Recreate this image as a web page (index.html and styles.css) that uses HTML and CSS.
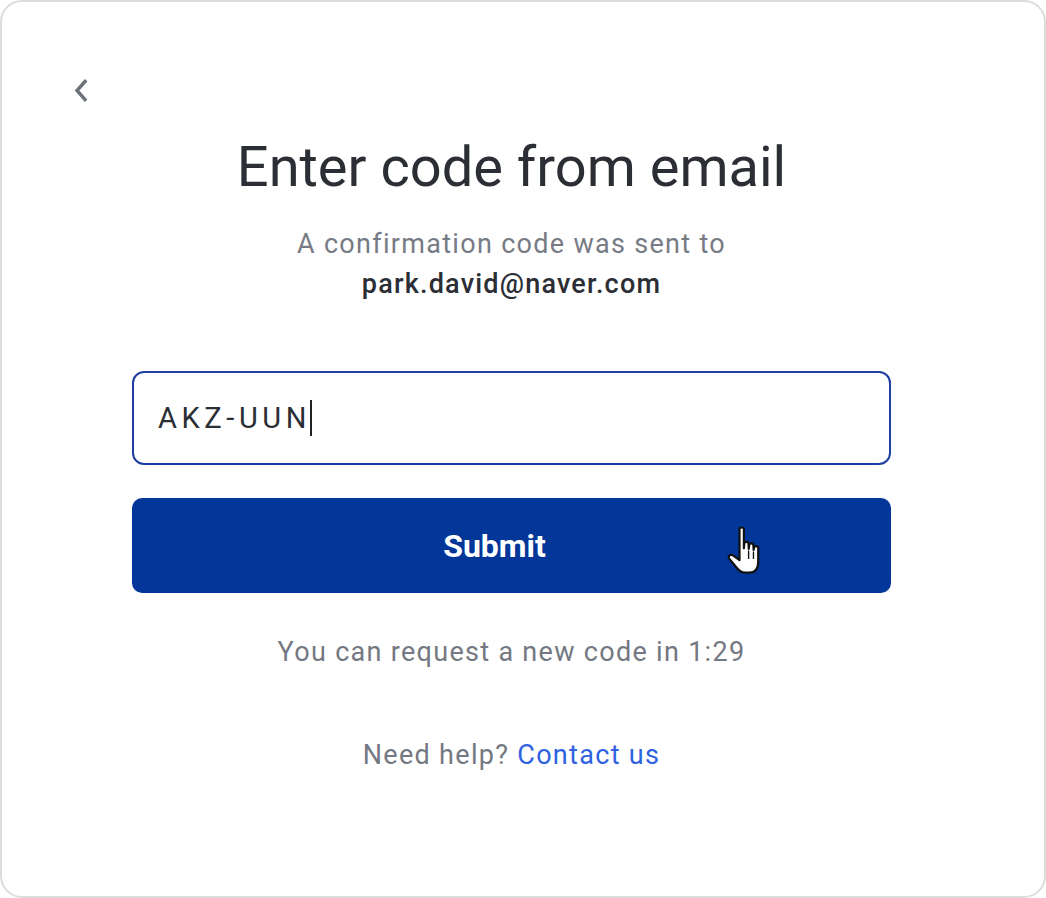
FILE: index.html
```html
<!DOCTYPE html>
<html lang="en">
<head>
    <meta charset="UTF-8">
    <meta name="viewport" content="width=device-width, initial-scale=1.0">
    <title>Enter code from email</title>
    <link rel="stylesheet" href="styles.css">
</head>
<body>

    <div class="card">
        <a class="back" href="#" aria-label="Back">
            <svg width="24" height="30" viewBox="0 0 24 30">
                <path d="M17 3.5 L9 12.5 L17 21.5" fill="none" stroke="#6b7079" stroke-width="3.4" stroke-linecap="square"/>
            </svg>
        </a>

        <div class="content">
            <h1>Enter code from email</h1>
            <p class="sub">A confirmation code was sent to</p>
            <p class="email">park.david@naver.com</p>

            <form id="codeForm">
                <div class="code-input">
                    <span class="code-text">AKZ-UUN</span><span class="caret"></span>
                </div>
                <button type="submit" class="submit">
                    Submit
                    <svg class="pointer" width="46" height="65" viewBox="0 0 17 24">
                        <path d="M5 1.5 C5 0.7 6.6 0.7 6.6 1.5 L6.6 8.6 L6.8 6.8 C6.8 6 8.3 6 8.3 6.8 L8.4 8.8 L8.6 7.4 C8.6 6.6 10.1 6.6 10.1 7.4 L10.2 9.2 L10.4 8.4 C10.4 7.6 11.9 7.6 11.9 8.4 L11.9 13.6 C11.9 16.4 10.6 17.6 8.6 17.6 L7 17.6 C5.6 17.6 4.8 16.9 3.8 15.6 L1.2 12.4 C0.6 11.6 1.6 10.6 2.6 11.2 L5 13 Z" fill="#ffffff" stroke="#111111" stroke-width="0.8" stroke-linejoin="round"/>
                        <path d="M8.35 9.4 L8.35 12.6 M10.15 9.8 L10.15 12.6" stroke="#111" stroke-width="0.5"/>
                    </svg>
                </button>
            </form>

            <p class="timer">You can request a new code in 1:29</p>
            <p class="help">Need help? <a href="#">Contact us</a></p>
        </div>
    </div>

</body>
</html>
```

FILE: styles.css
```css
html, body {
    margin: 0;
    padding: 0;
    background-color: #ffffff;
}

body {
    font-family: Roboto, "Liberation Sans", Arial, sans-serif;
    height: 898px;
    box-sizing: border-box;
}

.card {
    box-sizing: border-box;
    height: 898px;
    border: 2px solid #dcdcdc;
    border-radius: 22px;
    background-color: #fff;
    padding: 72px 153px 0 130px;
    position: relative;
}

.back {
    position: absolute;
    left: 66px;
    top: 76px;
    display: block;
    line-height: 0;
}

.content {
    display: flex;
    flex-direction: column;
    align-items: center;
}

h1 {
    margin: 58px 0 0 0;
    font-size: 56px;
    font-weight: 400;
    color: #2b2e34;
    line-height: 70px;
}

.sub {
    margin: 22px 0 0 0;
    font-size: 27px;
    letter-spacing: 1.3px;
    color: #777b84;
    line-height: 40px;
}

.email {
    margin: 0;
    font-size: 27px;
    letter-spacing: 1.2px;
    font-weight: 500;
    color: #2b2e34;
    line-height: 40px;
}

#codeForm {
    width: 100%;
    margin-top: 67px;
    display: flex;
    flex-direction: column;
    gap: 33px;
}

.code-input {
    box-sizing: border-box;
    height: 94px;
    border: 2px solid #1e3f9f;
    border-radius: 12px;
    padding: 0 24px;
    display: flex;
    align-items: center;
}

.code-text {
    font-size: 29px;
    letter-spacing: 4.6px;
    color: #2b2e34;
}

.caret {
    display: inline-block;
    width: 2px;
    height: 36px;
    margin-left: -1px;
    background-color: #222;
}

.submit {
    position: relative;
    height: 95px;
    border: none;
    border-radius: 10px;
    background-color: #033699;
    color: #fff;
    font-family: Roboto, "Liberation Sans", Arial, sans-serif;
    font-size: 32px;
    font-weight: 700;
    padding: 0 34px 0 0;
    cursor: pointer;
}

.pointer {
    position: absolute;
    left: 594px;
    top: 27px;
}

.timer {
    margin: 39px 0 0 0;
    font-size: 27px;
    letter-spacing: 1.3px;
    color: #747882;
    line-height: 40px;
}

.help {
    margin: 63px 0 0 0;
    font-size: 27px;
    letter-spacing: 1.3px;
    color: #747882;
    line-height: 40px;
}

.help a {
    color: #2f62e0;
    text-decoration: none;
}
```
